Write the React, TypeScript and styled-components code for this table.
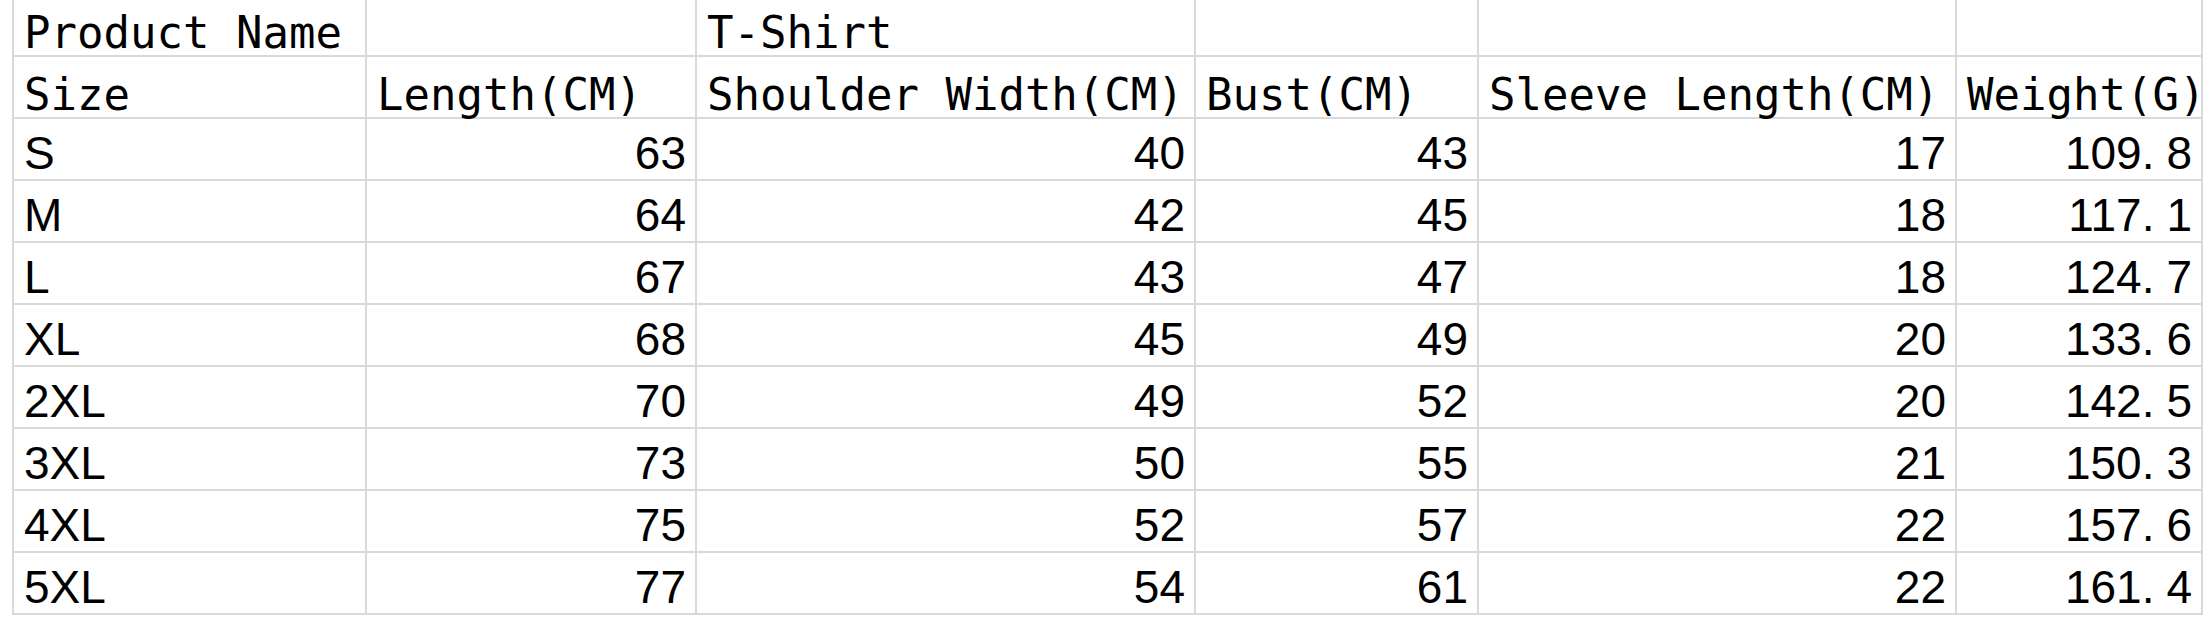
import * as React from 'react';
import styled, { createGlobalStyle } from 'styled-components';

const GlobalStyle = createGlobalStyle`
	body {
		margin: 0;
		background: #ffffff;
		color: #000000;
	}
`;

const widths = [353, 330, 499, 283, 478, 246];

const topRow = ['Product Name', '', 'T-Shirt', '', '', ''];
const headRow = ['Size', 'Length(CM)', 'Shoulder Width(CM)', 'Bust(CM)', 'Sleeve Length(CM)', 'Weight(G)'];

const rows: [string, number, number, number, number, string][] = [
	['S', 63, 40, 43, 17, '109.8'],
	['M', 64, 42, 45, 18, '117.1'],
	['L', 67, 43, 47, 18, '124.7'],
	['XL', 68, 45, 49, 20, '133.6'],
	['2XL', 70, 49, 52, 20, '142.5'],
	['3XL', 73, 50, 55, 21, '150.3'],
	['4XL', 75, 52, 57, 22, '157.6'],
	['5XL', 77, 54, 61, 22, '161.4'],
];

// weights show a wide gap after the decimal point
const Decimal = ({ value }: { value: string }) => {
	const [whole, frac] = value.split('.');
	return <>{whole}<Dot>.</Dot>{frac}</>;
};

export default function App() {
	return (
		<>
			<GlobalStyle />
			<Sheet>
				{topRow.map((t, i) => (
					<Cell key={'t' + i} $first>
						<HeadText>{t}</HeadText>
					</Cell>
				))}
				{headRow.map((t, i) => (
					<Cell key={'h' + i}>
						<HeadText>{t}</HeadText>
					</Cell>
				))}
				{rows.map((r) => (
					<React.Fragment key={r[0]}>
						<Cell>
							<Value>{r[0]}</Value>
						</Cell>
						<Cell $right><Value>{r[1]}</Value></Cell>
						<Cell $right><Value>{r[2]}</Value></Cell>
						<Cell $right><Value>{r[3]}</Value></Cell>
						<Cell $right><Value>{r[4]}</Value></Cell>
						<Cell $right><Value><Decimal value={r[5]} /></Value></Cell>
					</React.Fragment>
				))}
			</Sheet>
		</>
	);
}

const Sheet = styled.div`
	display: grid;
	grid-template-columns: ${widths.map((w) => w + 'px').join(' ')};
	margin-left: 12px;
	width: max-content;
	border-left: 2px solid #d9d9d9;
`;

const Cell = styled.div<{ $first?: boolean; $right?: boolean }>`
	box-sizing: border-box;
	height: ${(p) => (p.$first ? 57 : 62)}px;
	display: flex;
	align-items: flex-end;
	justify-content: ${(p) => (p.$right ? 'flex-end' : 'flex-start')};
	padding: 0 9px 0 10px;
	border-right: 2px solid #d9d9d9;
	border-bottom: 2px solid #d9d9d9;
	white-space: nowrap;
	overflow: visible;
`;

const HeadText = styled.span`
	font-family: "DejaVu Sans Mono", "Liberation Mono", monospace;
	font-size: 44px;
	line-height: 1;
`;

const Value = styled.span`
	font-family: "Liberation Sans", Arial, sans-serif;
	font-size: 46px;
	line-height: 1;
	padding-bottom: 3px;
`;

const Dot = styled.span`
	margin-right: 12px;
`;
